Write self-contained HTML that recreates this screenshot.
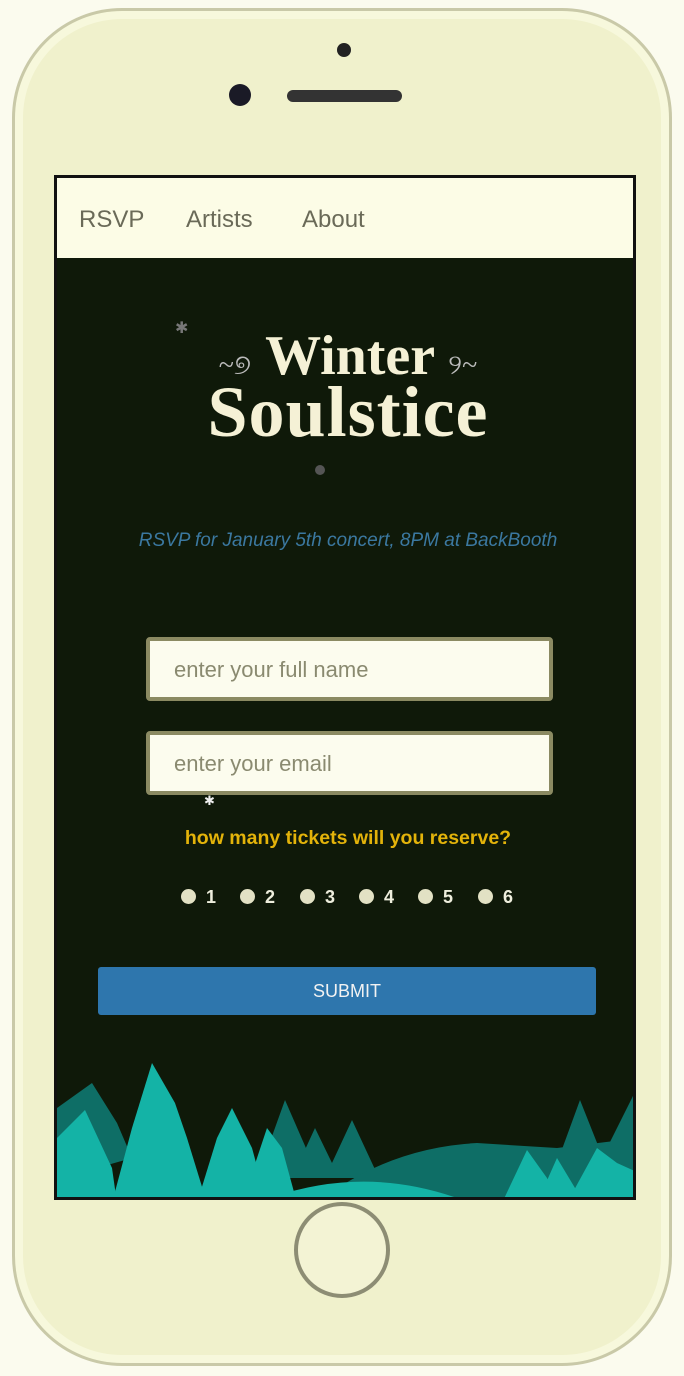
<!DOCTYPE html>
<html><head><meta charset="utf-8"><style>
*{margin:0;padding:0;box-sizing:border-box}
body{width:684px;height:1376px;background:#fbfbee;position:relative;overflow:hidden;font-family:"Liberation Sans",sans-serif}
.phone{position:absolute;left:12px;top:8px;width:660px;height:1358px;border-radius:110px;background:#f0f1cc;border:3px solid #c9c9a8;box-shadow:inset 0 0 0 8px #f7f8dc}
.abs{position:absolute}
.screen{position:absolute;left:54px;top:175px;width:582px;height:1025px;background:#0f1909;border:3px solid #111;overflow:hidden}
.nav{position:absolute;left:0;top:0;width:100%;height:80px;background:#fcfce6}
.nav span{position:absolute;top:28px;font-size:24px;color:#6a6a58}
.inp{position:absolute;left:89px;width:407px;height:64px;background:#fcfcee;border:4px solid #8b8a62;border-radius:4px;font-size:22px;color:#8a8a70;padding:16px 0 0 24px}
.r{position:absolute;top:709px;font-size:18px;color:#eeeedd;font-weight:bold}
.r i{display:inline-block;width:15px;height:15px;border-radius:50%;background:#e2e1c4;margin-right:10px;vertical-align:-1px}
</style></head><body>
<div class="phone"></div>
<div class="abs" style="left:337px;top:43px;width:14px;height:14px;border-radius:50%;background:#222"></div>
<div class="abs" style="left:229px;top:84px;width:22px;height:22px;border-radius:50%;background:#1a1a26"></div>
<div class="abs" style="left:287px;top:90px;width:115px;height:12px;border-radius:6px;background:#333"></div>
<div class="abs" style="left:294px;top:1202px;width:96px;height:96px;border-radius:50%;border:4px solid #8d8d74;background:#f3f3d4"></div>
<div class="screen">
 <div class="nav"><span style="left:22px">RSVP</span><span style="left:129px">Artists</span><span style="left:245px">About</span></div>
 <div class="abs" style="left:118px;top:140px;color:#777;font-size:16px">✱</div>
 <div class="abs" style="left:258px;top:287px;width:10px;height:10px;border-radius:50%;background:#555"></div>
 <div class="abs" style="left:0;width:582px;top:150px;text-align:center;font-family:'Liberation Serif',serif;font-weight:bold;color:#f5f1d6;line-height:1">
  <div style="font-size:56px;letter-spacing:0px"><span style="font-size:28px;color:#bbb;font-weight:normal">~୭</span> Winter <span style="font-size:28px;color:#bbb;font-weight:normal">୨~</span></div>
  <div style="font-size:72px;margin-top:-8px;letter-spacing:1px">Soulstice</div>
 </div>
 <div class="abs" style="left:0;width:582px;top:352px;text-align:center;font-style:italic;font-size:19px;color:#3b78a0">RSVP for January 5th concert, 8PM at BackBooth</div>
 <div class="inp" style="top:459px">enter your full name</div>
 <div class="inp" style="top:553px">enter your email</div>
 <div class="abs" style="left:147px;top:615px;color:#eee;font-size:13px">✱</div>
 <div class="abs" style="left:0;width:582px;top:649px;text-align:center;font-weight:bold;font-size:19.5px;color:#e3b30a">how many tickets will you reserve?</div>
 <div class="r" style="left:124px"><i></i>1</div>
 <div class="r" style="left:183px"><i></i>2</div>
 <div class="r" style="left:243px"><i></i>3</div>
 <div class="r" style="left:302px"><i></i>4</div>
 <div class="r" style="left:361px"><i></i>5</div>
 <div class="r" style="left:421px"><i></i>6</div>
 <div class="abs" style="left:41px;top:789px;width:498px;height:48px;background:#2e76ad;border-radius:3px;color:#f2f2f2;font-size:18px;text-align:center;line-height:48px">SUBMIT</div>
 <svg class="abs" style="left:0;top:860px" width="582" height="165" viewBox="0 0 582 165">
  <g fill="#0e6e66">
   <polygon points="0,70 35,45 60,85 75,120 40,130 0,130"/>
   <polygon points="200,140 228,62 262,140"/>
   <polygon points="235,140 258,90 275,125 295,82 322,140"/>
   <path d="M260,165 Q330,110 420,105 L500,110 L582,100 L582,165Z"/>
   <polygon points="500,125 523,62 550,130"/>
   <polygon points="545,120 575,60 582,45 582,140"/>
  </g>
  <g fill="#14b3a6">
   <polygon points="0,100 28,72 55,130 60,165 0,165"/>
   <polygon points="55,165 75,90 95,25 118,65 130,100 150,165"/>
   <polygon points="140,165 160,100 175,70 195,110 210,165"/>
   <polygon points="185,165 210,90 225,110 240,165"/>
   <path d="M200,165 Q300,125 400,160 L400,165Z"/>
   <polygon points="445,165 470,112 490,140 500,165"/>
   <polygon points="480,165 500,120 518,150 530,165"/>
   <polygon points="510,165 540,110 560,125 582,135 582,165"/>
  </g>
 </svg>
</div>
</body></html>
